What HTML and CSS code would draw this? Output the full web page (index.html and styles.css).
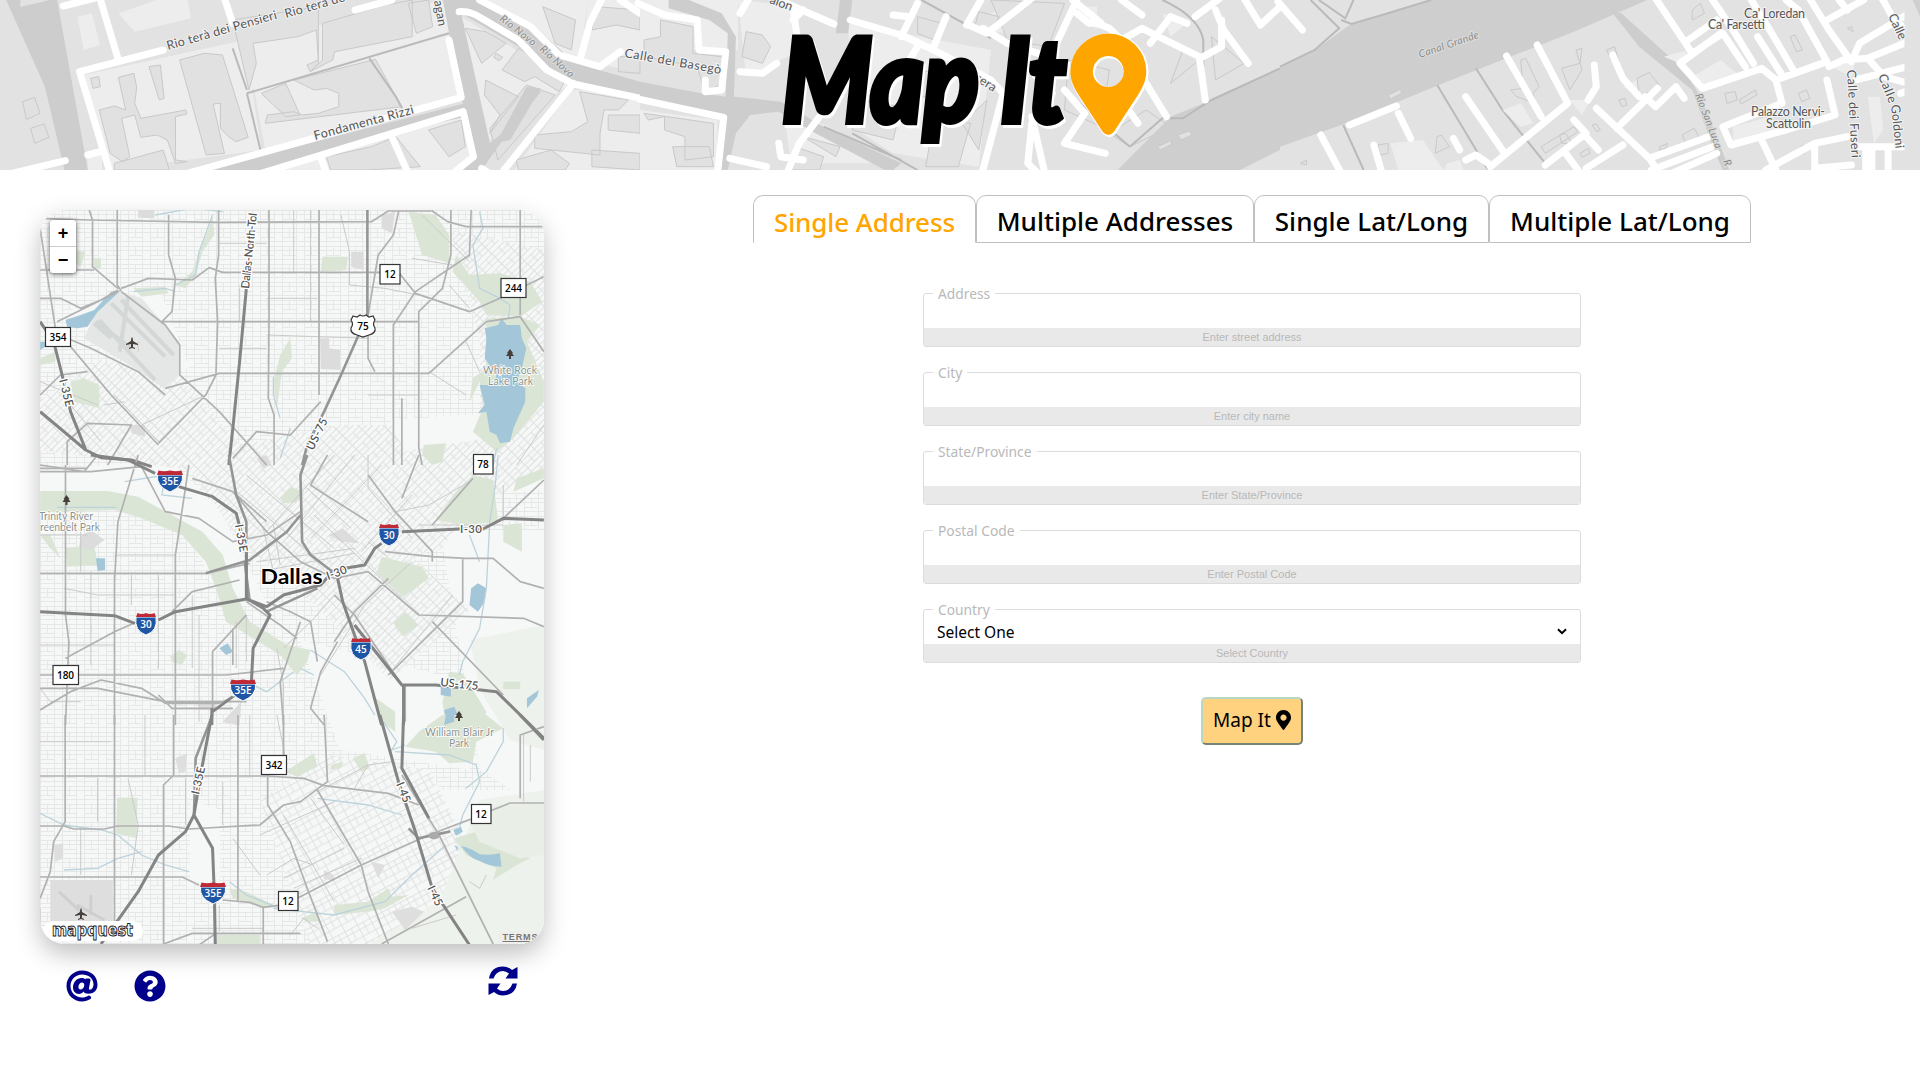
FILE: index.html
```html
<!DOCTYPE html>
<html lang="en">
<head>
<meta charset="utf-8">
<title>Map It</title>
<link rel="stylesheet" href="styles.css">
</head>
<body>
<header class="banner">
<svg class="banner-map" viewBox="0 0 1920 170" aria-hidden="true">
  <defs>
    <pattern id="waves" width="8" height="6" patternUnits="userSpaceOnUse"><rect width="8" height="6" fill="#cfcfcf"/><path d="M0 3q2-2 4 0t4 0" fill="none" stroke="#c9c9c9"/></pattern>
  </defs>
  <rect width="1920" height="170" fill="#e2e2e2"/>
  <!-- west quarter -->
  <g class="z" transform="scale(.40816 .33333)">
    <path class="lot" d="M190 50L225 40L245 135L205 150ZM290 40L385 0H460L468 55L330 95ZM205 225L600 120L640 450L270 510ZM600 120L1090 0L1120 285L650 450ZM620 130L770 90L770 200L610 270ZM790 70L940 20L990 50V110L800 120ZM920 175L1040 140L1070 250L985 290ZM215 470L250 460V510H215ZM1130 50L1400 250L1200 420ZM1170 0H1440L1420 190ZM1260 510L1400 270H1568V510ZM1440 0H1568V220L1430 180ZM660 510L960 400L1140 340L1160 460L1110 510Z"/>
    <path class="bld" d="M290 232L328 220L335 262L330 310L345 355L455 330L458 342L430 350V480L458 485L430 490L410 420L385 405L345 412L330 345L298 355L318 470L300 485L270 460L243 330L280 318L308 330ZM440 180L500 160L545 165L608 412L578 425L560 410L540 385V310L522 312L550 460L505 465ZM365 200L393 195L402 295L390 300ZM222 235L242 230L246 260L228 265ZM570 60L780 20V190L760 215L752 195L780 180L775 90L730 110L620 130L628 190L610 270ZM790 70L945 15L1010 0V110L820 155L815 180L760 215L790 180ZM720 240L920 178L970 290L985 320L650 370L655 345L720 335L740 345L780 340L830 320V280L800 265L770 270ZM800 470L910 440L970 410L1030 500L900 510H810ZM1050 390L1130 360L1140 440L1100 470ZM1000 10L1050 0L1060 80L1020 100ZM640 280L700 250L735 345L700 350ZM55 305L85 292L98 340L65 358ZM75 385L108 372L120 412L85 430ZM1140 85L1190 95L1240 130L1180 190ZM1270 145L1350 200L1385 240L1370 275L1310 230L1285 245L1230 210ZM1190 240L1270 290L1200 400L1225 345L1187 285ZM1200 385L1290 255L1360 285L1220 480ZM1420 275L1540 300L1515 330H1480L1470 400V465L1310 445V405L1400 395L1440 365ZM1490 345H1568V400L1490 390ZM1265 480L1350 450L1395 490L1385 510H1270ZM1450 500V450L1568 460V510ZM1330 20L1410 60L1400 150L1360 130ZM1460 20L1568 30V90L1510 75L1450 90ZM1515 170H1568V220L1515 215ZM280 490L400 450L415 510H280ZM1215 160L1232 172L1222 182L1210 172Z"/>
    <path class="can" d="M15 0H140L215 510H158L110 260ZM50 0V20L90 10L120 0ZM500 510L980 360L1140 310V350L960 400L640 510ZM1085 0H1170L1310 80L1410 190L1568 245V300L1390 250L1270 140L1130 40L1200 430L1230 400L1310 260L1325 275L1220 440L1180 510H1120L1165 470L1130 290ZM1290 260L1325 265L1250 420L1215 430Z"/>
    <path class="cl" d="M605 280L1100 100M605 280L640 460M905 175L970 290L985 325M570 145L605 270"/>
    <path class="w7" d="M155 18L230 -5M245 -5L290 180M195 215L400 150M870 30L960 0M550 -5L570 70M195 215L270 520M-5 530L160 482M215 465L245 455M430 530L1130 292L1100 120M640 520L1135 335L1160 470L1110 520M960 410L1000 520M785 470L800 520M1125 35Q1150 30 1180 55L1270 120L1340 210L1405 252L1570 295M1175 0L1300 80L1370 165L1470 200L1520 155M1475 -5L1445 70L1422 175M1405 250L1235 510M1520 0L1568 40M1180 505L1210 530"/>
  </g>
  <!-- central quarter -->
  <g class="z" transform="translate(640) scale(.40816 .33333)">
    <path class="lot" d="M0 0H240V150H0ZM0 50L130 70V160L0 150ZM0 330L190 360V510H0ZM240 0L390 20L380 160L260 230ZM350 320L480 390L600 490H370ZM510 70L860 150L830 500L620 460L520 380ZM820 60L880 30L900 100L830 90ZM1060 20H1120V90ZM1280 40L1340 70L1300 110Z"/>
    <path class="bld" d="M50 60L130 80V160L200 170V250L160 280L140 200L10 170V120L50 110ZM10 340L180 370V470L110 480V410L60 390V350L20 360ZM80 440H170L180 500H90ZM260 95L300 105L320 140L300 190L250 170ZM380 440L450 470L440 510H370ZM400 410L490 440L480 470ZM540 300L640 320L620 420L520 390ZM650 200L760 230L740 300L640 280ZM680 50L740 70L720 120L680 100ZM830 35L880 50L860 95L820 80ZM790 370L850 300L830 450ZM860 0L1040 10L1000 140L900 120ZM1050 180L1150 210L1130 380L1040 330ZM1240 330L1300 380L1200 440L1150 400ZM1330 150L1370 180L1300 250ZM1400 110L1480 190L1410 240ZM720 360L810 370L780 500H700Z"/>
    <path class="can" d="M70 0H120L200 40L235 110L230 290L345 305L450 380L640 490L620 510H600L430 400L340 335L270 345L235 400L215 510H190L200 350L0 290V245L150 280L210 290L215 100L170 60L70 25ZM490 0H520L510 100L480 100Z"/>
    <path d="M1170 510L1300 350L1400 300L1568 205V450L1470 510Z" fill="url(#waves)"/>
    <path class="cl" d="M690 0L860 115M1280 0Q1370 50 1380 120V200M1040 270L1200 440M1200 440L1280 355H1330L1400 300L1568 205M520 400L680 510M450 380L640 480"/>
    <path class="w7" d="M-5 10L60 45L140 60L145 150L210 155L200 270L160 275V240M245 215L300 220L335 190M0 298L205 352L190 520M245 40L265 0M375 25L385 110M340 0L475 72M375 60L400 30M515 60L640 105L720 150L860 240L890 280L840 510M680 10L640 110M620 45L660 50M750 50L720 140M660 180L680 140M800 75L835 0M805 75L850 100L960 -5M840 85L900 130L1000 170M990 210L1070 0M1060 0L1130 70L1100 70L1070 40M1110 65L1150 85L1180 120M1150 140L1230 85L1370 170L1385 300M1180 0L1230 45M1250 130L1300 50L1340 70M1420 -5L1360 50M1410 30L1430 90L1490 190M1480 -5L1520 75L1568 20M1225 220L1290 350M1180 300L1220 370M1040 270L1090 340L1040 430L1140 460M960 350L990 510M1010 280L960 370L950 490L975 520M340 430L345 470L400 480M440 350L390 430L360 520M220 475L310 500M1380 170L1425 140V60"/>
    <path class="bld" d="M1318 405L1345 393L1353 405L1325 420ZM1268 440L1300 422L1303 432L1275 450Z"/>
  </g>
  <!-- east quarter -->
  <g class="z" transform="translate(1280) scale(.40816 .33333)">
    <path d="M170 75L370 0H900L720 95L400 250L150 375L0 440V200L80 155Z" fill="url(#waves)"/>
    <path class="can" d="M815 40L835 38L990 210L1030 290L1080 440L1100 510H1085L1060 440L1010 270L880 140Z"/>
    <path class="cl" d="M385 255L510 510M480 205L545 330L650 490M155 375L205 510M0 200L85 150L145 85L75 0M150 60L175 72L250 45L370 0M95 0L160 55L180 0"/>
    <path class="lot" d="M545 330L590 310L620 370L590 380ZM270 430L350 420L400 510H290ZM710 300L760 300L740 345ZM1010 230L1080 180L1130 230L1040 270ZM1110 380L1200 350L1230 390L1110 430ZM1440 290H1470L1478 390L1455 430ZM840 260L910 220L930 260L880 290ZM940 170L1000 150L980 190ZM1350 200L1410 180L1400 230ZM410 490L440 480L450 510H400Z"/>
    <path class="bld" d="M590 180L602 175L635 260L620 280L625 310L580 290L565 270L595 265ZM875 235L905 217L932 260L880 290ZM690 205L735 190L740 145L725 150L740 210L710 270ZM800 150L820 140L830 185L812 180ZM985 405L1015 385L1028 415L995 430ZM1125 300L1165 270L1168 285L1130 312ZM1090 280L1115 275L1120 300L1095 310ZM1270 280L1290 270L1298 295L1278 305ZM1250 110L1262 105L1280 150L1265 155ZM735 460L755 445L760 460L740 472ZM685 405L700 400L715 430L690 430ZM765 375L775 372L785 390L775 395ZM1390 85L1400 80L1405 95ZM265 285L295 268L298 280L270 297ZM385 410L395 405L415 440L380 460ZM240 435L265 430V460L245 465ZM830 300L845 295L850 315L838 320ZM50 490L65 480V495ZM1010 30L1030 10L1040 40L1010 60ZM640 440L720 380L730 395L650 460ZM930 440L950 430L945 445L930 450ZM1275 440L1285 435V460H1275Z"/>
    <path class="w7" d="M-5 5L55 90M170 375L285 318M290 340L320 415M100 405L150 520M230 435L250 520M455 290L550 460M555 168L640 350M630 135L705 310L515 500M425 415L440 450M455 480L480 465L510 490M770 195L775 260L755 300M815 165L840 235L880 290M825 385L925 265M895 290L920 320L970 260L990 295M775 325L905 475L1050 410M650 495L750 400L720 360M750 410L780 450M700 460L730 510M750 505L840 435M905 475L930 520M910 510L1060 440M960 520L1070 460M920 -5L1010 160L1085 100L1140 200M980 190L1080 100M980 190L1035 265L1180 205L1215 240L1230 310L1085 380L1105 435L1240 390L1360 345L1340 240M1060 0L1110 90L1160 190M1000 120L1070 60M1155 0L1200 90L1260 215M1170 110L1230 225M1215 240L1340 185L1270 30L1240 0M1300 0L1345 90L1400 185L1420 130L1568 20M1340 60L1430 0M1475 -5L1500 50L1568 130M1345 200L1380 180L1440 175L1568 110M1440 175L1480 230L1568 260M1410 240L1568 190M1180 420L1215 510M1190 510L1310 430L1390 410M1310 440V510M1310 505L1400 495M1410 440H1568M1435 440V510M1450 440V510M1490 440V510M1520 280L1568 260M1370 0L1390 30"/>
    <path d="M1530 0H1568V510H1530Z" fill="#e2e2e2"/><path d="M1535 0H1550L1568 50V0Z" fill="#cfcfcf"/>
  </g>
  <g class="street">
    <text transform="translate(168 50) rotate(-16)" textLength="114">Rio terà dei Pensieri</text>
    <text transform="translate(286 18) rotate(-16)" textLength="62">Rio terà de</text>
    <text transform="translate(315 140) rotate(-15)" textLength="103">Fondamenta Rizzi</text>
    <text transform="translate(434 1) rotate(80)" textLength="26">agan</text>
    <text transform="translate(624 57) rotate(10)" textLength="98">Calle del Basegò</text>
    <text transform="translate(769 3) rotate(20)">alon</text>
    <text transform="translate(974 80) rotate(32)">sera</text>
    <text transform="translate(1847 70) rotate(87)" textLength="88">Calle dei Fuseri</text>
    <text transform="translate(1878 76) rotate(68)" textLength="30">Calle</text><text transform="translate(1891 105) rotate(84)" textLength="44">Goldoni</text>
    <text transform="translate(1888 16) rotate(65)">Calle</text>
    <text x="1744" y="18" textLength="61">Ca' Loredan</text><text x="1708" y="29" textLength="57">Ca' Farsetti</text>
    <text x="1751" y="116" textLength="74">Palazzo Nervi-</text><text x="1766" y="128" textLength="45">Scattolin</text>
  </g>
  <g class="water-name">
    <text transform="translate(499 20) rotate(38)" textLength="43">Rio Novo</text>
    <text transform="translate(539 50) rotate(42)" textLength="42">Rio Novo</text>
    <text transform="translate(1420 58) rotate(-19)" textLength="63">Canal Grande</text>
    <text transform="translate(1695 95) rotate(69)" textLength="58">Rio San Luca</text>
    <text transform="translate(1723 161) rotate(70)">R</text>
  </g>
  <g class="logo">
    <text class="logo-halo" x="784" y="125" textLength="284" lengthAdjust="spacingAndGlyphs">Map It</text>
    <text x="782" y="122" textLength="284" lengthAdjust="spacingAndGlyphs">Map It</text>
    <path d="M1108.3 33.500a38 38 0 0 1 38 38c0 8-3 15-8 23l-24.500 37.500q-5.500 6-11 0l-24.500-37.500c-5-8-8-15-8-23a38 38 0 0 1 38-38zm0 22.500a15.500 15.500 0 1 0 .01 0z" fill="#fff" stroke="#fff" stroke-width="2.500" transform="translate(1 1)" fill-rule="evenodd"/>
    <path d="M1108.3 33.500a38 38 0 0 1 38 38c0 8-3 15-8 23l-24.500 37.500q-5.500 6-11 0l-24.500-37.500c-5-8-8-15-8-23a38 38 0 0 1 38-38zm0 22.500a15.500 15.500 0 1 0 .01 0z" fill="#ffa500" fill-rule="evenodd"/>
  </g>
</svg>
</header>

<main class="page">
<section class="left">
<div class="map">
<svg class="map-svg" viewBox="0 0 504 734" aria-hidden="true">
  <defs>
    <pattern id="g0" width="22" height="18" patternUnits="userSpaceOnUse"><path d="M0 .5H22M0 4.500H22M0 9.500H14M0 13.500H22M.5 0V18M7.500 0V9M14.500 0V18" fill="none" stroke="#e6e7e7"/></pattern>
    <pattern id="g1" width="18" height="14" patternUnits="userSpaceOnUse" patternTransform="rotate(-45)"><path d="M0 .5H18M0 5H18M0 9.500H18M.5 0V14M10 0V9" fill="none" stroke="#dfe0e0"/></pattern>
    <pattern id="g2" width="14" height="20" patternUnits="userSpaceOnUse" patternTransform="rotate(-28)"><path d="M0 .5H14M0 5.500H14M0 13H14M.5 0V20M7 0V13" fill="none" stroke="#e1e2e2"/></pattern>
    <g id="tree"><path d="M0-5L3-1H2L4 2H1V5H-1V2H-4L-2-1H-3Z" fill="#463f3a"/></g>
    <g id="plane"><path d="M0-6Q1-5 1-2L6 1V2L1 1V4L3 5V6L0 5L-3 6V5L-1 4V1L-6 2V1L-1-2Q-1-5 0-6Z" fill="#463f3a"/></g>
    <g id="i2"><path d="M-10-7Q-12 7 0 11Q12 7 10-7Z" fill="#1f55a5" stroke="#fff"/><path d="M-8.500-11Q-4-9 0-11Q4-9 8.500-11L10-7H-10Z" fill="#bf2a36"/></g>
    <g id="i3"><path d="M-12.500-6Q-14 5 0 11Q14 5 12.500-6Z" fill="#1f55a5" stroke="#fff"/><path d="M-11.500-10.500Q-6-9 0-10.500Q6-9 11.500-10.500L13-6H-13Z" fill="#bf2a36"/></g>
  </defs>
  <rect width="504" height="734" fill="#f6f7f7"/>
  <rect width="504" height="734" fill="url(#g0)"/>
  <g fill="#f6f7f7">
    <path d="M0 190L60 150L140 165L200 235L300 215L350 215L365 240L420 260L430 300L400 340L370 345L430 400L350 470L270 390L200 330L150 260L0 240Z"/>
    <path d="M220 590L290 545L390 560L440 660L370 734H270Z"/><path d="M410 20L504 40V230L440 240L440 130Z"/>
    <path d="M350 210L504 200V280L380 290ZM260 430L420 470L430 560L300 540ZM400 320H504V600L440 560ZM400 580H504V734H400ZM150 590L180 600V690L150 670ZM30 100L120 80L150 160L60 140ZM0 260L130 250L180 300L230 400L180 380L130 300L0 290Z"/>
  </g>
  <path d="M0 190L60 150L140 165L200 235L300 215L350 215L365 240L420 260L430 300L400 340L370 345L430 400L350 470L270 390L200 330L150 260L0 240ZM410 20L504 40V230L440 240L440 130ZM370 240L504 220V260L400 320Z" fill="url(#g1)"/>
  <path d="M220 590L290 545L390 560L440 660L370 734H270Z" fill="url(#g2)"/>
  <path d="M430 430L504 415V540L470 530L440 480ZM440 590L504 580V734H330L400 690Z" fill="#eef2ec"/>
  <g class="z" transform="translate(-10 -15) scale(.33806 .33333)">
    <path class="park" d="M1120 50L1200 60L1240 120V205L1160 180ZM1260 180L1300 240L1390 235L1480 260L1515 320L1450 365L1350 360L1330 320L1250 230ZM1350 370L1450 365L1510 390L1470 440L1520 560V620L1430 730L1380 770L1310 710L1340 640L1330 560L1300 620L1310 550L1350 520ZM120 560L160 550L205 570V640L130 620ZM865 185H940L935 225L860 230ZM1165 750L1230 745L1220 800L1190 810L1160 780ZM720 560L740 480L770 430L775 490L745 530L730 640ZM305 280L400 275L410 295L330 305ZM30 490L75 470V500L30 510ZM110 165L165 170L150 215L120 200ZM190 190H210V220H190ZM500 170L530 100L540 60L545 120L510 170L490 240L460 280L430 270L480 230Z"/>
    <path d="M240 300L270 290L330 310L440 440V540L395 580L310 520L160 430L200 340Z" fill="#e5e6e6"/>
    <path d="M240 325L400 485M270 315L425 480M205 375L370 555M190 385L240 430M290 305L265 470M195 380L300 460" fill="none" stroke="#d3d7d5" stroke-width="4"/>
    <path d="M320 45H368V70L320 68ZM950 170H987V225L950 215ZM858 430H885V460L918 465V525L860 522ZM1040 60L1080 50L1070 115L1040 100ZM300 690H340V725L300 715Z" fill="#dcdcdc"/>
    <path class="lake" d="M105 375L150 360L190 345L240 290L270 285L200 350L170 395L140 400L110 395ZM1345 400L1385 390L1395 370L1410 390L1450 390L1455 430L1468 460L1455 520L1440 560L1465 580V620L1430 700L1420 740L1390 745L1380 720L1360 710L1350 650L1325 655L1345 630L1330 570L1370 570L1380 540L1345 490L1350 430ZM30 440H45V455L30 465Z"/>
    <path class="creek" d="M1330 50L1340 100L1310 150L1330 280L1390 310L1420 330L1415 370M720 545L720 600L740 670M770 700L740 790M540 60L500 170L490 240L430 270M1380 760L1370 810M370 60L480 40L570 50M305 290L400 280L430 290"/>
  </g>
  <g class="z" transform="translate(-10 245) scale(.33806 .33333)">
    <path class="park" d="M30 108L230 108L320 125L510 230L570 300L600 400L650 500L760 570L830 585L820 620L790 660L740 600L580 500L550 400L520 320L450 240L330 190L250 165L30 172ZM1040 305L1160 335L1180 370L1105 425L1025 355ZM1310 60L1370 75L1385 200L1280 210L1200 195L1260 110ZM1400 210L1455 205L1455 290L1400 260ZM740 130L770 95L810 110L790 140L750 145ZM105 280L190 270L200 330L110 335ZM1110 470L1150 510L1105 545L1075 505ZM415 605L440 585L465 600L450 630L420 620ZM1240 650L1280 655L1350 770L1330 830L1230 810L1220 740ZM1400 680H1450V703H1400ZM1010 720L1080 770V830L1040 800ZM30 240L60 240L90 310L60 280ZM1440 70L1520 40V70L1430 110Z"/>
    <path d="M885 240L925 220L975 265L920 260ZM150 245L180 225L220 255L180 285L145 275ZM570 800L625 740L620 810ZM670 10L700 0L715 30L690 40ZM500 740H550V765H500Z" fill="#dcdcdc"/>
    <path class="lake" d="M1305 400L1325 385L1350 400L1345 440L1325 470L1300 450ZM195 310H222V345L200 348ZM560 580L585 565L600 590L580 600ZM1215 690L1245 700V725L1215 720ZM1225 765L1255 755L1265 780L1235 810ZM1470 730L1505 705L1500 725L1470 760Z"/>
    <path class="creek" d="M1385 0L1375 100L1360 200L1350 400L1330 520L1280 620L1270 660M80 157H255M280 80L400 60L390 120L480 130M830 585L930 650L990 730L1020 780M800 640L840 660M1330 320L1300 240M660 690L700 710L780 650"/>
  </g>
  <g class="z" transform="translate(-10 505) scale(.33806 .33333)">
    <path class="park" d="M1150 50L1220 0H1350L1400 40L1320 80L1310 140L1240 145L1200 110L1110 95ZM755 170L800 140L840 115L850 155L790 185ZM955 130L990 115L1005 160L980 170ZM258 248H318L315 370L255 355ZM890 150L925 140L920 160L890 165ZM1255 370L1320 350L1480 430L1440 450L1370 495L1380 460L1290 420ZM900 570L1000 560L1060 520L1070 545L1120 540L1050 580L1000 590L900 600ZM590 520L640 530L720 570L690 580L600 550ZM550 660H680V687H550ZM800 610L850 590L860 620L820 620Z"/>
    <path d="M1320 275L1520 265V420L1450 430L1330 380L1300 320Z" fill="#e9efe6"/>
    <path d="M60 495H245V620H60ZM1070 590L1130 575L1165 590L1110 645ZM430 130L465 115L460 170L440 175ZM70 390L98 385V430L75 440ZM1010 440L1050 450L1030 490ZM570 20L610 0H625L610 30ZM870 465L900 480V500L870 490Z" fill="#dedede"/>
    <path d="M85 530L150 590M180 540V600M140 570L220 615" fill="none" stroke="#cdd0cf" stroke-width="3"/>
    <path class="lake" d="M1275 392Q1310 402 1330 418Q1360 422 1390 415L1395 455Q1360 455 1330 438Q1300 430 1275 392ZM1252 345L1275 335L1280 350L1260 362ZM1230 0H1255V20L1225 30ZM1255 390L1265 395V410Z"/>
    <path class="creek" d="M30 295L100 330L210 345L260 360L330 420L400 450L470 470M100 465L200 460L260 430L330 410M590 500L640 540L740 580M1080 110L1240 120L1320 150L1330 200L1280 300L1270 340M720 580L900 600L1050 560L1130 480L1230 390M1045 20L1085 80L1070 105L1110 90M1400 40V80L1350 170L1290 220M850 250L1000 270L1100 300"/>
  </g>
  <!-- arterial roads -->
  <g class="z" transform="translate(-10 -15) scale(.33806 .33333)">
    <path class="t" d="M780 45V230M830 45V380M560 145H700M920 60L945 170V270L1050 280L1150 300M700 310H850M560 460H700M220 630L280 620M120 630L210 740M1160 60L1300 200M1130 190L1250 210M1240 270L1300 340M1520 690L1440 810M250 600L380 740M30 560L200 630M330 690L520 600M320 440V470M620 270V380M700 420L1000 430M1000 600H1150M1180 530L1290 600M1290 440L1330 530"/>
    <path class="m" d="M30 70L175 75L560 82L1010 80L1060 48H1190L1235 80L1290 95H1520M175 45L185 75V215L260 280M258 45V270L270 288M410 60V180L430 250L420 350L390 380M558 45V180L548 250L555 380L550 540L520 600L380 745M707 45V380L705 610L722 660V810M855 45V600M30 225H190M270 280L350 250L480 255L530 218L570 232H1090L1140 295L1300 350L1390 310L1520 245M30 310L90 310L150 340L210 315L260 285M390 380H1150M30 600L90 540L170 530M400 580L560 535H1180L1350 380L1450 365L1520 470M270 290L400 390L443 450V540L560 650L700 810M110 430L180 460L320 530L400 600M1090 50L1075 120L1030 180L1000 360M1245 45V180L1220 280L1150 350V760L1160 810M1305 45L1300 180L1140 290L1075 390V810M1450 45V360M1000 380V490L1020 530M30 100L75 400L240 600L380 750M80 380L260 290M30 820H170M230 810L300 690L170 685L110 740V810M860 620L770 720L670 710L600 790M1100 610V810"/>
    <path class="h2" d="M998 45V360L920 540L870 650L820 750L805 810"/>
    <path class="h" d="M640 280L620 500L600 700L588 810M30 380L70 440L95 540L120 650L165 765M30 650L165 765L210 788L300 795L360 815"/>
  </g>
  <g class="z" transform="translate(-10 245) scale(.33806 .33333)">
    <path class="t" d="M150 170V350M180 350V630M300 360V450M380 360V640M30 240H170M250 300H430M100 400L200 420H430M480 420V640M30 570H250M500 480V800M840 180L1100 430M820 100L950 220M900 0L700 230M960 0L760 250M1040 30L830 250M1130 120L980 290M600 100L860 320M640 60L900 280M720 210L740 330M690 220L720 350M670 320L960 280M680 350L960 295M1000 0V100L1130 250M1080 170L1180 150L1300 80M1150 210L1400 210M1050 300L1000 260M750 580L840 490L900 420M860 660L990 450L1130 320M1060 660L1250 420M610 500V640M640 480V620M730 580L750 690V810M30 700L60 740H150M1400 90V200"/>
    <path class="m" d="M30 50H180L330 35L400 170L500 190L600 260L700 240L800 170M320 0L260 200L250 380V810M105 30V480L115 560L105 810M30 355H520L650 325M470 30L430 300V810M30 700H200L400 740H640M30 660H580L750 640M30 765L120 710L210 675L330 700L400 745H560L660 700M105 610L250 530L340 490M420 470L480 410L620 375M480 70L600 110L700 230L800 320L900 370L1000 350L1150 480L1460 490L1520 515M1050 290L1190 305L1290 310H1370L1450 380L1520 400M1000 60L1080 170L1190 290V320M1280 310V440L1060 660M1190 500L1400 720M640 440L740 510L790 550M850 620L830 500L770 470L700 440M900 420L960 480L1100 690M910 560L860 650L830 760L870 810M750 810L740 680L800 500M540 780V590L640 480M600 630V520M1060 370L960 470L900 560M1310 70L1250 140L1190 210M880 0L830 90L860 110L1000 200M1150 0L1100 130M1520 75L1400 190M600 110L700 200M1110 800V690M380 720L420 760H600M30 30L160 50L200 0"/>
    <path class="h2" d="M588 0L610 120L640 200V430M520 355L650 315L760 230L800 180M820 0L800 60L805 260L830 300L920 370M635 320L650 440M700 470L850 400"/>
    <path class="h" d="M180 0L290 15L370 55M440 95L540 125L610 175L640 290V430L690 460L710 480L660 580L655 680M1100 230L1270 222H1340L1400 190L1520 195M30 470L250 482L310 505M380 495L430 470L640 432L700 455L750 420L860 390L900 345L990 330L1020 280L1040 265M910 370L925 440L960 540L990 620L1040 810M960 510L1100 690H1200L1380 710L1520 850M1105 690V810M540 770L600 725M538 760V810"/>
  </g>
  <g class="z" transform="translate(-10 505) scale(.33806 .33333)">
    <path class="t" d="M30 80H240M340 0V180M650 0V180M730 0L760 150M150 340V480M200 190V320M290 190L320 330L300 480M30 580V640M460 190V330M570 200V330M850 230L1000 150L960 220M1000 150L1070 140M750 300L900 560M830 250L930 390M700 480L780 430L840 450M1350 480L1330 520L1300 500M1460 60V260M1480 90V200M1130 640L1260 600M480 640H690M560 570V650M770 660L810 610L850 640M600 370L680 480M680 360L900 260M750 490L930 400M780 520L980 430"/>
    <path class="m" d="M30 183H700L810 190L870 212L1060 235L1150 270M104 0V320L70 380L60 470L30 550M250 0V340V620M395 687V210L425 180V0M615 0V560M30 333H100L130 342H220L260 333H410L470 342L680 330L750 270L800 260L880 200L870 0M30 486H450L500 510M570 555L650 562L690 577L740 570M794 548L980 450L1180 360L1310 310M1363 287L1420 264H1520M703 180V270L770 380L820 520L880 680M850 225L980 450L1000 530L1060 687M1100 180L1210 360L1370 687M1040 687L1290 545M690 577V687M480 655H800M395 687L480 655M750 0V140M1450 250V60L1520 35M500 690L550 655"/>
    <path class="h2" d="M540 0L490 130L485 300M1120 340L1150 370L1240 350L1190 360"/>
    <path class="h" d="M538 0L510 150L485 300L540 400L545 530L548 687M485 300L460 350L380 420L320 530L210 687M1035 0L1090 200L1140 350L1190 520L1300 690M1105 0L1100 160L1180 310M1450 0L1520 75"/>
    <ellipse cx="1195" cy="362" rx="16" ry="11" fill="#aaa"/>
  </g>
  <g class="label road-name">
    <text transform="translate(209 79) rotate(-84)" textLength="76">Dallas-North-Tol</text>
    <text transform="translate(273 241) rotate(-64)" textLength="34">US-75</text>
    <text transform="translate(19 170) rotate(76)" textLength="28">I-35E</text>
    <text transform="translate(195 315) rotate(80)" textLength="28">I-35E</text>
    <text x="420" y="323" textLength="22">I-30</text>
    <text transform="translate(288 370) rotate(-20)" textLength="21">I-30</text>
    <text transform="translate(400 476) rotate(6)" textLength="38">US-175</text>
    <text transform="translate(159 585) rotate(-77)" textLength="28">I-35E</text>
    <text transform="translate(356 574) rotate(68)" textLength="21">I-45</text>
    <text transform="translate(387 678) rotate(64)" textLength="21">I-45</text>
  </g>
  <g class="label park-name">
    <text x="443" y="164" textLength="54">White Rock</text><text x="448" y="175" textLength="45">Lake Park</text>
    <text x="-1" y="310" textLength="54">Trinity River</text><text x="0" y="321" textLength="60">reenbelt Park</text>
    <text x="385" y="526" textLength="69">William Blair Jr</text><text x="409" y="537" textLength="20">Park</text>
  </g>
  <use href="#tree" x="470" y="144"/><use href="#tree" x="26.500" y="290"/><use href="#tree" x="419" y="506"/>
  <use href="#plane" x="92" y="133"/><use href="#plane" x="41" y="704"/>
  <g fill="#fff" stroke="#333" stroke-width="1.200">
    <rect x="340" y="54.500" width="20" height="19.500"/><rect x="461" y="68.500" width="25" height="19"/><rect x="5.500" y="117.500" width="25" height="19"/><rect x="433.500" y="244.500" width="19.500" height="19.500"/><rect x="13" y="455.500" width="25.500" height="19"/><rect x="221.500" y="545.500" width="25" height="19"/><rect x="431.500" y="594.500" width="19.500" height="19"/><rect x="238.500" y="681.500" width="19.500" height="19"/>
    <path d="M313 106l4 1 3-2q3 2 6 0l3 2 4-1 2 4q-3 4 0 8 1 5-6 7l-6 2-6-2q-7-2-6-7 3-4 0-8z"/>
  </g>
  <use href="#i3" x="130" y="271"/><use href="#i2" x="349" y="325"/><use href="#i2" x="106" y="414"/><use href="#i2" x="321" y="439"/><use href="#i3" x="203" y="480"/><use href="#i3" x="173" y="683"/>
  <g class="num">
    <text x="350" y="68">12</text><text x="473.500" y="82">244</text><text x="18" y="131">354</text><text x="443" y="258">78</text><text x="25.500" y="469">180</text><text x="234" y="559">342</text><text x="441" y="608">12</text><text x="248" y="695">12</text><text x="323" y="119.500">75</text>
    <g fill="#fff"><text x="130" y="275">35E</text><text x="349" y="329">30</text><text x="106" y="418">30</text><text x="321" y="443">45</text><text x="203" y="484">35E</text><text x="173" y="687">35E</text></g>
  </g>
  <text class="city" x="220.500" y="374" textLength="62" lengthAdjust="spacingAndGlyphs">Dallas</text>
  <rect x="3" y="711" width="100" height="20" rx="10" fill="#fff"/>
  <text class="mq" x="12" y="725.500" textLength="81" lengthAdjust="spacingAndGlyphs">mapquest</text>
  <rect x="458" y="721" width="46" height="13" fill="#eee" opacity=".8"/>
  <text class="terms" x="462.500" y="729.500" textLength="35">TERMS</text>
  <path d="M462.500 731.500H493" stroke="#777"/>
</svg>
<div class="zoom"><button>+</button><button>−</button></div>
</div>
<nav class="tools">
  <svg width="32" height="32" viewBox="0 0 512 512"><path d="M256 8C118.941 8 8 118.919 8 256c0 137.059 110.919 248 248 248 48.154 0 95.342-14.140 135.408-40.223 12.005-7.815 14.625-24.288 5.552-35.372l-10.177-12.433c-7.671-9.371-21.179-11.667-31.373-5.129C325.920 429.757 291.314 440 256 440c-101.458 0-184-82.542-184-184S154.542 72 256 72c100.139 0 184 57.619 184 160 0 38.786-21.093 79.742-58.170 83.693-17.349-.454-16.910-12.857-13.476-30.024l23.433-121.110C394.653 149.750 383.308 136 368.225 136h-44.981a13.518 13.518 0 0 0-13.432 11.993l-.01.092c-14.697-17.901-40.448-21.775-59.971-21.775-74.580 0-137.831 62.234-137.831 151.460 0 65.303 36.785 105.870 96 105.870 26.984 0 57.369-15.637 74.991-38.333 9.522 34.104 40.613 34.104 70.710 34.104C462.609 379.410 504 307.798 504 232 504 95.653 394.023 8 256 8zm-21.680 304.430c-22.249 0-36.070-15.623-36.070-40.771 0-44.993 30.779-72.729 58.630-72.729 22.292 0 35.601 15.241 35.601 40.770 0 45.061-33.875 72.730-58.161 72.730z"/></svg>
  <svg width="32" height="32" viewBox="0 0 512 512"><path d="M504 256c0 136.997-111.043 248-248 248S8 392.997 8 256C8 119.083 119.043 8 256 8s248 111.083 248 248zM262.655 90c-54.497 0-89.255 22.957-116.549 63.758-3.536 5.286-2.353 12.415 2.715 16.258l34.699 26.310c5.205 3.947 12.621 3.008 16.665-2.122 17.864-22.658 30.113-35.797 57.303-35.797 20.429 0 45.698 13.148 45.698 32.958 0 14.976-12.363 22.667-32.534 33.976C247.128 238.528 216 254.941 216 296v4c0 6.627 5.373 12 12 12h56c6.627 0 12-5.373 12-12v-1.333c0-28.462 83.186-29.647 83.186-106.667 0-58.002-60.165-102-116.531-102zM256 338c-25.365 0-46 20.635-46 46 0 25.364 20.635 46 46 46s46-20.636 46-46c0-25.365-20.635-46-46-46z"/></svg>
  <svg class="sync" width="30" height="30" viewBox="0 0 30 30"><g id="arrow"><path d="M1 12.500Q3 .5 15 .5Q20 .5 24 4L29.500 1V12.500H17.500L21 7.500Q18 5 15 5Q8 5 5.500 12.500Z"/></g><use href="#arrow" transform="rotate(180 15 15)"/></svg>
</nav>
</section>

<section class="right">
  <nav class="tabs">
    <a class="tab t1 active"><span>Single Address</span></a><a class="tab t2"><span>Multiple Addresses</span></a><a class="tab t3"><span>Single Lat/Long</span></a><a class="tab t4"><span>Multiple Lat/Long</span></a>
  </nav>
  <form class="form">
    <fieldset class="field"><legend>Address</legend><div class="value"></div><div class="hint">Enter street address</div></fieldset>
    <fieldset class="field"><legend>City</legend><div class="value"></div><div class="hint">Enter city name</div></fieldset>
    <fieldset class="field"><legend>State/Province</legend><div class="value"></div><div class="hint">Enter State/Province</div></fieldset>
    <fieldset class="field"><legend>Postal Code</legend><div class="value"></div><div class="hint">Enter Postal Code</div></fieldset>
    <fieldset class="field"><legend>Country</legend><div class="value"><span>Select One</span><svg width="10" height="7" viewBox="0 0 10 7"><path d="M1 1.200L5 5.200L9 1.200" fill="none" stroke="#000" stroke-width="2"/></svg></div><div class="hint">Select Country</div></fieldset>
    <button class="go" type="button"><span>Map It</span><svg width="15" height="20" viewBox="0 0 384 512"><path d="M172.268 501.670C26.970 291.031 0 269.413 0 192 0 85.961 85.961 0 192 0s192 85.961 192 192c0 77.413-26.970 99.031-172.268 309.670-9.535 13.774-29.930 13.773-39.464 0zM192 272c44.183 0 80-35.817 80-80s-35.817-80-80-80-80 35.817-80 80 35.817 80 80 80z"/></svg></button>
  </form>
</section>
</main>
</body>
</html>
```
FILE: styles.css
```css
* { box-sizing: border-box; }
body { margin: 0; background: #fff; color: #000; font-family: "Noto Sans", sans-serif; height: 1080px; overflow: hidden; }
.banner { height: 170px; overflow: hidden; }
.banner-map { display: block; width: 1920px; height: 170px; }
.z path { vector-effect: non-scaling-stroke; }
.lot { fill: #ededed; }
.bld { fill: #e1e1e1; stroke: #c9c9c9; stroke-width: 1; }
.can { fill: #cdcdcd; }
.cl { fill: none; stroke: #bababa; stroke-width: 2; }
.w7 { fill: none; stroke: #fff; stroke-width: 7; stroke-linecap: round; stroke-linejoin: round; }
.street text, .water-name text { font-family: Lato, sans-serif; font-size: 12.5px; fill: #555; stroke: #f4f4f4; stroke-width: 2px; paint-order: stroke; }
.water-name text { font-style: italic; font-size: 10.5px; fill: #8a8a8a; stroke: #ddd; }
.logo text { font-family: Lato, sans-serif; font-weight: 900; font-style: italic; font-size: 117px; stroke: #000; stroke-width: 6px; }
.logo .logo-halo { fill: #fff; stroke: #fff; }

.page { display: flex; }
.left { width: 584px; padding: 40px 40px 0; }
.map { position: relative; width: 504px; height: 734px; border-radius: 25px; box-shadow: 0 10px 25px rgba(0, 0, 0, .25); overflow: hidden; }
.map-svg { display: block; width: 504px; height: 734px; }
.park { fill: #dbe5d6; }
.lake { fill: #a3c6d8; }
.creek { fill: none; stroke: #bcd3dc; stroke-width: 1.3; }
.t { fill: none; stroke: #cacaca; stroke-width: 1; }
.m { fill: none; stroke: #b1b1b1; stroke-width: 1.7; stroke-linejoin: round; }
.h { fill: none; stroke: #848484; stroke-width: 3; stroke-linejoin: round; }
.h2 { fill: none; stroke: #959595; stroke-width: 2.6; stroke-linejoin: round; }
.label text { font-family: Lato, sans-serif; stroke: #fff; stroke-width: 2.5px; paint-order: stroke; }
.road-name text { font-size: 11.5px; font-weight: 600; fill: #555; }
.park-name text { font-size: 10.5px; fill: #8c948f; stroke-width: 1.5px; }
.num text { font: 600 10px "Open Sans", sans-serif; text-anchor: middle; }
.city { font: 700 20px Lato, sans-serif; stroke: #fff; stroke-width: 2px; paint-order: stroke; }
.mq { font: 700 17px "DejaVu Sans", sans-serif; fill: #fff; stroke: #222; stroke-width: 1px; }
.terms { font: 700 9px "Liberation Sans", sans-serif; fill: #777; }
.zoom { position: absolute; left: 10px; top: 10px; width: 26px; display: flex; flex-direction: column; background: #fff; border-radius: 4px; box-shadow: 0 1px 5px rgba(0, 0, 0, .65); overflow: hidden; }
.zoom button { height: 26px; border: 0; background: #fff; padding: 0; font: 700 18px/26px "Liberation Sans", sans-serif; color: #000; }
.zoom button + button { height: 27px; border-top: 1px solid #ccc; }
.tools { display: flex; padding: 26px 26px 0; fill: #00008b; }
.tools svg + svg { margin-left: 36px; }
.tools .sync { margin-left: auto; margin-top: -4px; }

.right { width: 1336px; padding-left: 169px; }
.tabs { display: flex; padding-top: 25px; }
.tab { display: flex; justify-content: center; height: 48px; border: 1px solid #c0c0c0; border-radius: 10px 10px 0 0; font-size: 26px; font-weight: 500; line-height: 51px; white-space: nowrap; }
.t1 { width: 223px; }
.t2 { width: 278px; }
.t3 { width: 235px; }
.t4 { width: 262px; }
.tab.active { color: #ffa500; border-bottom-color: transparent; line-height: 53px; letter-spacing: -.1px; }
.form { width: 998px; padding-top: 42px; display: flex; flex-direction: column; align-items: center; }
.field { width: 658px; height: 62px; margin: 0 0 17px; padding: 0; min-width: 0; border: 1px solid #dcdcdc; border-radius: 3px; }
.field legend { margin-left: 9px; padding: 0 5px; height: 17px; font-size: 13.8px; line-height: 18px; color: #b9b9b9; white-space: nowrap; }
.value { height: 26px; display: flex; justify-content: space-between; align-items: center; padding: 2px 13px 0; font-size: 15.5px; }
.value svg { margin-top: -2px; }
.hint { height: 18px; background: #e9e9e9; color: #b8b8b8; text-align: center; font: 11px/18px "Liberation Sans", sans-serif; }
.go { display: flex; align-items: center; justify-content: center; gap: 5px; width: 102px; height: 48px; margin-top: 17px; padding: 0 0 2px; background: #ffd280; border: 2px solid; border-color: #b8d8c4 #768476 #768476 #b8d8c4; border-radius: 5px; font: 19px "Noto Sans", sans-serif; color: #000; }
```
